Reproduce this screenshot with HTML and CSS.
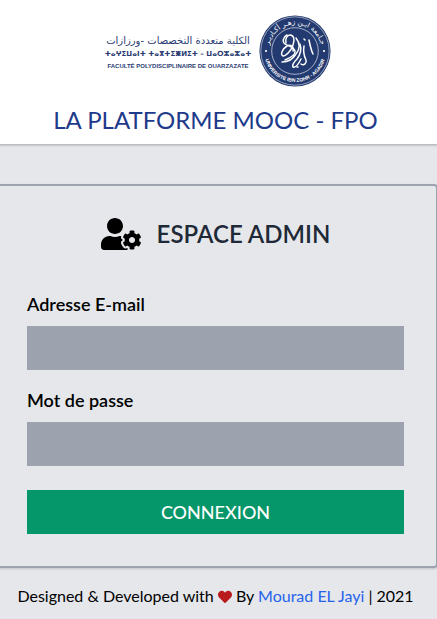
FILE: index.html
```html
<!DOCTYPE html>
<html lang="fr">
<head>
<meta charset="utf-8">
<meta name="viewport" content="width=device-width, initial-scale=1">
<title>La plateforme MOOC - FPO</title>
<link rel="stylesheet" href="styles.css">
</head>
<body>
<div class="page">
  <header class="site-header">
    <div class="brand">
      <div class="brand-names">
        <span class="brand-ar" lang="ar" dir="rtl">الكلية متعددة التخصصات -ورزازات</span>
        <span class="brand-zgh" lang="zgh">ⵜⴰⵖⵉⵡⴰⵏⵜ ⵜⴰⴳⵜⵉⵥⵍⵉⵜ – ⵡⴰⵔⵣⴰⵣⴰⵜ</span>
        <span class="brand-fr">FACULTÉ POLYDISCIPLINAIRE DE OUARZAZATE</span>
      </div>
      <svg class="seal" viewBox="0 0 72 72" role="img" aria-label="Université Ibn Zohr - Agadir">
        <defs>
          <path id="arc-top" d="M9.500 36a26.500 26.500 0 0 1 53 0"/>
          <path id="arc-bottom" d="M5 36a31 31 0 0 0 62 0"/>
        </defs>
        <circle cx="36" cy="36" r="35.600" fill="#233a70"/>
        <circle cx="36" cy="36" r="34.200" fill="none" stroke="#dfe4ee" stroke-width=".6"/>
        <circle cx="36" cy="36" r="23.300" fill="none" stroke="#dfe4ee" stroke-width=".7"/>
        <circle cx="7" cy="36" r="1.100" fill="#fff"/>
        <circle cx="65" cy="36" r="1.100" fill="#fff"/>
        <text class="seal-ar"><textPath href="#arc-top" startOffset="50%" text-anchor="middle">جـامعة ابـن زهـر أكـاديـر</textPath></text>
        <text class="seal-fr"><textPath href="#arc-bottom" startOffset="50%" text-anchor="middle">UNIVERSITÉ IBN ZOHR - AGADIR</textPath></text>
        <g fill="none" stroke="#fff" stroke-width="1.500" stroke-linecap="round" stroke-linejoin="round">
          <path d="M27 28c-1-4 1-8 4-8 4 0 5 5 3 10-2 6-7 11-10 11-3-1-1-7 4-10 4-2 7 1 6 5"/>
          <path d="M28 20c-4 2-5 7-2 9s9 3 10 7-5 7-10 9"/>
          <path d="M37 23c4 5 4 11 0 16-3 5-8 8-14 8"/>
          <path d="M41 29c2 6 0 11-3 15-3 3-5 6-4 8 2 1 5-2 8-8"/>
          <path d="M45 31c-1 6 0 10 2 14 1 3-2 6-5 4"/>
          <path d="M50 25c1 5 2 10 4 14"/>
          <path d="M45 24l1 1M38 52l1 0"/>
        </g>
      </svg>
    </div>
    <h1 class="site-title">LA PLATFORME MOOC - FPO</h1>
  </header>
  <main class="card">
    <div class="card-head">
      <svg class="admin-icon" viewBox="0 0 640 512" aria-hidden="true"><path d="M610.500 373.300c2.600-14.100 2.600-28.500 0-42.600l25.800-14.900c3-1.700 4.300-5.200 3.300-8.500-6.700-21.600-18.200-41.200-33.200-57.400-2.300-2.500-6-3.100-9-1.400l-25.800 14.900c-10.900-9.300-23.400-16.500-36.900-21.300v-29.800c0-3.400-2.400-6.400-5.700-7.100-22.300-5-45-4.800-66.200 0-3.300.7-5.700 3.700-5.700 7.100v29.800c-13.500 4.800-26 12-36.900 21.300l-25.800-14.900c-2.900-1.700-6.700-1.100-9 1.400-15 16.200-26.500 35.800-33.200 57.400-1 3.300.4 6.800 3.300 8.500l25.800 14.900c-2.600 14.100-2.600 28.500 0 42.600l-25.800 14.900c-3 1.700-4.300 5.200-3.300 8.500 6.700 21.600 18.200 41.100 33.200 57.400 2.300 2.500 6 3.100 9 1.400l25.800-14.900c10.900 9.300 23.400 16.500 36.900 21.300v29.800c0 3.400 2.400 6.400 5.700 7.100 22.300 5 45 4.800 66.200 0 3.300-.7 5.700-3.700 5.700-7.100v-29.800c13.500-4.800 26-12 36.900-21.300l25.800 14.900c2.900 1.700 6.700 1.100 9-1.400 15-16.200 26.500-35.800 33.200-57.400 1-3.300-.4-6.800-3.300-8.500l-25.800-14.900zM496 400.500c-26.800 0-48.500-21.800-48.500-48.500s21.800-48.500 48.500-48.500 48.500 21.800 48.500 48.500-21.700 48.500-48.500 48.500zM224 256c70.700 0 128-57.300 128-128S294.700 0 224 0 96 57.300 96 128s57.300 128 128 128zm201.200 226.500c-2.300-1.200-4.600-2.600-6.800-3.900l-7.900 4.600c-6 3.400-12.800 5.300-19.600 5.300-10.900 0-21.400-4.600-28.900-12.600-18.300-19.800-32.300-43.900-40.200-69.600-5.500-17.700 1.900-36.400 17.900-45.700l7.900-4.600c-.1-2.600-.1-5.200 0-7.800l-7.900-4.600c-16-9.200-23.400-28-17.900-45.700.9-2.900 2.200-5.800 3.200-8.700-3.800-.3-7.500-1.200-11.400-1.200h-16.700c-22.200 10.200-46.900 16-72.900 16s-50.600-5.800-72.900-16h-16.700C60.200 288 0 348.200 0 422.400V464c0 26.500 21.500 48 48 48h352c10.100 0 19.500-3.200 27.200-8.500-1.200-3.800-2-7.700-2-11.800v-9.200z"/></svg>
      <h2 class="card-title">ESPACE ADMIN</h2>
    </div>
    <form class="login">
      <div class="field">
        <label for="email">Adresse E-mail</label>
        <input id="email" name="email" type="email">
      </div>
      <div class="field">
        <label for="password">Mot de passe</label>
        <input id="password" name="password" type="password">
      </div>
      <button class="submit" type="submit">CONNEXION</button>
    </form>
  </main>
  <footer class="site-footer">Designed &amp; Developed with <svg class="heart" viewBox="0 0 512 512" role="img" aria-label="love"><path d="M462.300 62.600C407.500 15.900 326 24.300 275.700 76.200L256 96.500l-19.700-20.300C186.100 24.300 104.500 15.900 49.700 62.600c-62.800 53.600-66.100 149.800-9.900 207.900l193.500 199.800c12.500 12.900 32.800 12.900 45.300 0l193.500-199.800c56.300-58.100 53-154.300-9.800-207.900z"/></svg> By <a href="#">Mourad EL Jayi</a> | 2021</footer>
</div>
</body>
</html>
```

FILE: styles.css
```css
* { box-sizing: border-box; }

body {
  margin: 0;
  overflow-x: clip;
  background: #e5e7eb;
  color: #000;
  font-family: Lato, "Liberation Sans", sans-serif;
  font-size: 16px;
  line-height: 24px;
}

h1, h2 { margin: 0; }

/* The page bleeds past both window edges, so the card's side borders run off it. */
.page { margin: 0 -1px 0 -7px; }

.site-header {
  display: flex;
  flex-direction: column;
  align-items: center;
  gap: 17px;
  padding: 15px 16px 8px;
  background: #fff;
  box-shadow: 0 1px 3px rgba(0, 0, 0, .2), 0 1px 2px rgba(0, 0, 0, .1);
}

.brand {
  display: flex;
  align-items: center;
  gap: 8px;
  padding-left: 5px;
  color: #2b3c72;
}

.brand-names {
  display: flex;
  flex-direction: column;
  align-items: center;
  padding-top: 3px;
  white-space: nowrap;
}

.brand-ar { font: 10px/14px "DejaVu Sans", sans-serif; }
.brand-zgh { font: bold 7px/12px "DejaVu Sans", sans-serif; }
.brand-fr { font: bold 6px/12px "Liberation Sans", sans-serif; }

.seal { width: 72px; height: 72px; }
.seal-ar { font: 7px "DejaVu Sans", sans-serif; fill: #fff; }
.seal-fr { font: bold 5px "Liberation Sans", sans-serif; fill: #fff; }

.site-title {
  color: #1e3a8a;
  font-size: 24px;
  font-weight: 400;
  line-height: 32px;
}

.card {
  margin-top: 40px;
  padding: 32px;
  border: 2px solid #9ca3af;
  border-radius: 4px;
  box-shadow: 0 1px 3px rgba(0, 0, 0, .1), 0 1px 2px rgba(0, 0, 0, .06);
}

.card-head {
  display: flex;
  align-items: center;
  justify-content: center;
  gap: 16px;
  margin-bottom: 40px;
}

.admin-icon { width: 40px; height: 32px; }

.card-title {
  color: #1f2937;
  font-size: 24px;
  font-weight: 600;
  line-height: 32px;
}

.login {
  display: flex;
  flex-direction: column;
  gap: 16px;
}

.field {
  display: flex;
  flex-direction: column;
  gap: 8px;
}

.field label {
  font-size: 18px;
  font-weight: 600;
  line-height: 28px;
}

.field input {
  width: 100%;
  height: 44px;
  padding: 8px 12px;
  border: 0;
  background: #9ca3af;
  font: inherit;
}

.submit {
  height: 44px;
  margin-top: 8px;
  padding: 8px;
  border: 0;
  background: #059669;
  color: #fff;
  font: 500 18px/28px Lato, "Liberation Sans", sans-serif;
}

.site-footer {
  padding: 16px;
  text-align: center;
}

.site-footer a { color: #2563eb; text-decoration: none; }
.heart { width: 14px; height: 14px; vertical-align: -2px; fill: #b91c1c; }
```
